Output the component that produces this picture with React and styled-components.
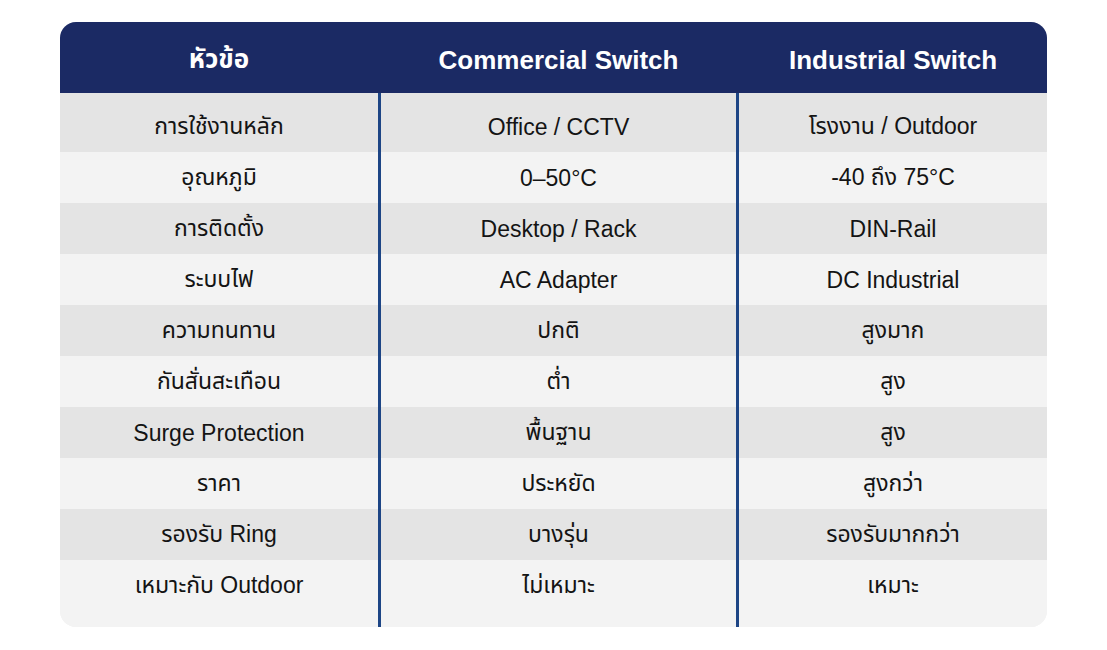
import React from "react";
import styled, { createGlobalStyle } from "styled-components";

const Global = createGlobalStyle`
  html, body { margin: 0; padding: 0; background: #ffffff; }
  body { font-family: "Liberation Sans", "Noto Sans Thai", "Noto Sans", sans-serif; }
`;

const Page = styled.div`
  padding: 22px 60px;
  width: 1107px;
  box-sizing: border-box;
`;

const Table = styled.div`
  display: grid;
  grid-template-columns: 318px 358px 311px;
  border-radius: 16px;
  overflow: hidden;
  background: #f3f3f3;
`;

const HeadCell = styled.div`
  background: #1b2a64;
  color: #ffffff;
  height: 71px;
  box-sizing: border-box;
  display: flex;
  align-items: center;
  justify-content: center;
  font-weight: 700;
  font-size: 26px;
  padding-top: 5px;
  padding-left: ${(p) => (p.$col > 0 ? "3px" : "0")};
`;

const Cell = styled.div`
  display: flex;
  align-items: center;
  justify-content: center;
  box-sizing: border-box;
  height: ${(p) => 51 + (p.$first ? 8 : 0) + (p.$last ? 16 : 0)}px;
  padding-top: ${(p) => (p.$first ? 8 : 0) + 1}px;
  padding-bottom: ${(p) => (p.$last ? 16 : 0)}px;
  background: ${(p) => (p.$odd ? "#e4e4e4" : "#f3f3f3")};
  border-left: ${(p) => (p.$col > 0 ? "3px solid #1d4585" : "none")};
  color: #141414;
  font-size: 23px;
`;

const headers = ["หัวข้อ", "Commercial Switch", "Industrial Switch"];

const rows = [
  ["การใช้งานหลัก", "Office / CCTV", "โรงงาน / Outdoor"],
  ["อุณหภูมิ", "0–50°C", "-40 ถึง 75°C"],
  ["การติดตั้ง", "Desktop / Rack", "DIN-Rail"],
  ["ระบบไฟ", "AC Adapter", "DC Industrial"],
  ["ความทนทาน", "ปกติ", "สูงมาก"],
  ["กันสั่นสะเทือน", "ต่ำ", "สูง"],
  ["Surge Protection", "พื้นฐาน", "สูง"],
  ["ราคา", "ประหยัด", "สูงกว่า"],
  ["รองรับ Ring", "บางรุ่น", "รองรับมากกว่า"],
  ["เหมาะกับ Outdoor", "ไม่เหมาะ", "เหมาะ"],
];

export default function App() {
  return (
    <>
      <Global />
      <Page>
        <Table>
          {headers.map((h, i) => (
            <HeadCell key={h} $col={i}>{h}</HeadCell>
          ))}
          {rows.map((r, ri) =>
            r.map((c, ci) => (
              <Cell
                key={`${ri}-${ci}`}
                $col={ci}
                $odd={ri % 2 === 0}
                $first={ri === 0}
                $last={ri === rows.length - 1}
              >
                {c}
              </Cell>
            ))
          )}
        </Table>
      </Page>
    </>
  );
}
